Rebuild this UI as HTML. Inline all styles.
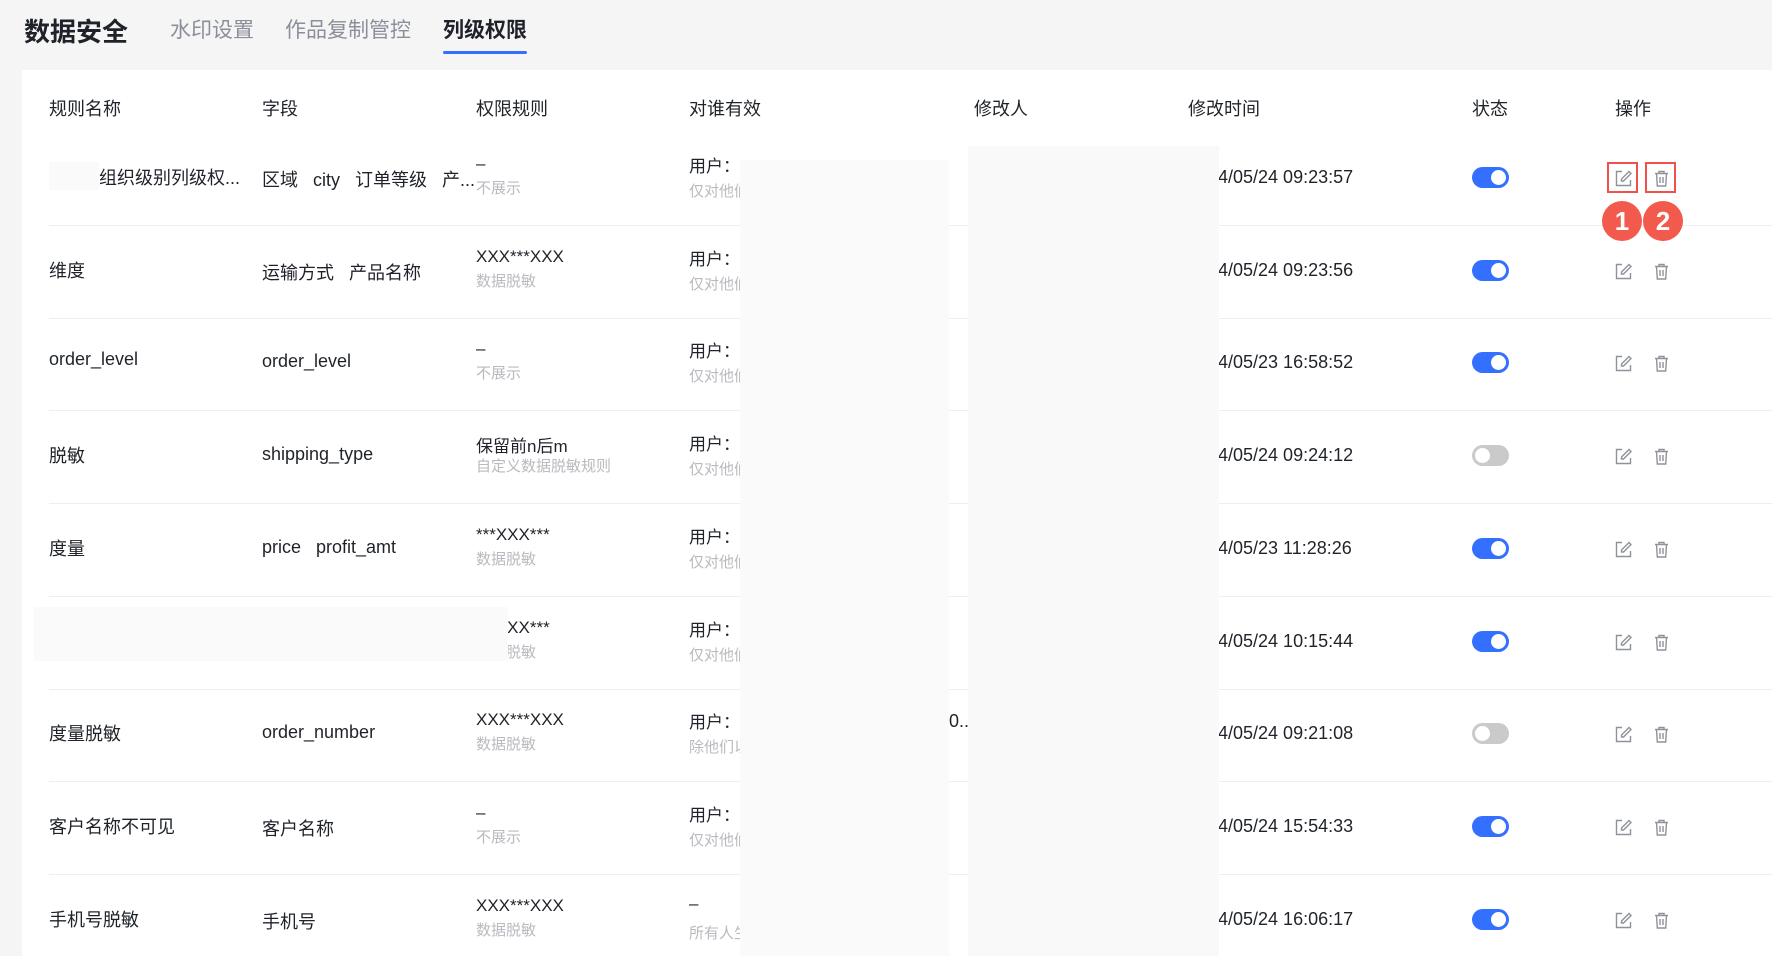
<!DOCTYPE html>
<html><head><meta charset="utf-8"><style>
*{margin:0;padding:0;box-sizing:border-box}
body{width:1772px;height:956px;background:#f5f5f6;font-family:"Liberation Sans","Noto Sans CJK SC",sans-serif;color:#1f2329;position:relative;overflow:hidden}
.a{position:absolute;white-space:nowrap}
.title{left:24px;top:12px;font-size:26px;font-weight:bold;color:#1f2329}
.tab{top:14px;font-size:21px;color:#8a8f99}
.card{left:22px;top:70px;width:1750px;height:886px;background:#fff}
.h{top:95px;font-size:18px;color:#1f2329}
.m{font-size:18px;color:#1f2329}
.s{font-size:15px;color:#b8babf}
.sep{left:49px;width:1723px;height:1px;background:#eeeff1}
.tg{width:37px;height:21px;border-radius:11px;background:#3370ff}
.tg::after{content:"";position:absolute;top:3px;right:3px;width:15px;height:15px;border-radius:50%;background:#fff}
.tg.off{background:#cacaca}
.tg.off::after{right:auto;left:3px}
.ov{background:#fafafa}
</style></head><body>
<div class="a title">数据安全</div>
<div class="a tab" style="left:170px">水印设置</div>
<div class="a tab" style="left:285px">作品复制管控</div>
<div class="a tab" style="left:443px;color:#1f2329;font-weight:bold">列级权限</div>
<div class="a" style="left:443px;top:51px;width:84px;height:3px;background:#3370ff;border-radius:2px"></div>
<div class="a card"></div>
<div class="a h" style="left:49px">规则名称</div>
<div class="a h" style="left:262px">字段</div>
<div class="a h" style="left:476px">权限规则</div>
<div class="a h" style="left:689px">对谁有效</div>
<div class="a h" style="left:974px">修改人</div>
<div class="a h" style="left:1188px">修改时间</div>
<div class="a h" style="left:1472px">状态</div>
<div class="a h" style="left:1615px">操作</div>
<div id="rows"></div>
<script>
var R=[
["组织级别列级权...","区域&nbsp;&nbsp;&nbsp;city&nbsp;&nbsp;&nbsp;订单等级&nbsp;&nbsp;&nbsp;产...","–","不展示","用户：","仅对他们生效","4/05/24 09:23:57",1],
["维度","运输方式&nbsp;&nbsp;&nbsp;产品名称","XXX***XXX","数据脱敏","用户：","仅对他们生效","4/05/24 09:23:56",1],
["order_level","order_level","–","不展示","用户：","仅对他们生效","4/05/23 16:58:52",1],
["脱敏","shipping_type","保留前n后m","自定义数据脱敏规则","用户：","仅对他们生效","4/05/24 09:24:12",0],
["度量","price&nbsp;&nbsp;&nbsp;profit_amt","***XXX***","数据脱敏","用户：","仅对他们生效","4/05/23 11:28:26",1],
["","","***XXX***","数据脱敏","用户：","仅对他们生效","4/05/24 10:15:44",1],
["度量脱敏","order_number","XXX***XXX","数据脱敏","用户：","除他们以外","4/05/24 09:21:08",0],
["客户名称不可见","客户名称","–","不展示","用户：","仅对他们生效","4/05/24 15:54:33",1],
["手机号脱敏","手机号","XXX***XXX","数据脱敏","–","所有人生效","4/05/24 16:06:17",1]];
var h="";
var ed='<svg width="19" height="19" viewBox="0 0 19 19" fill="none" stroke="#8f9299" stroke-width="1.4"><path d="M8 2.5H2.5v14h14V11"/><path d="M15 2.5l2 2-7.5 7.5H7.5V10z"/></svg>';
var tr='<svg width="17" height="19" viewBox="0 0 17 19" fill="none" stroke="#8f9299" stroke-width="1.4"><path d="M2 4.5h13M6 4.5V2.5h5v2M3.5 4.5l.8 12.5h8.4l.8-12.5M7 8v6M10 8v6"/></svg>';
R.forEach(function(r,i){
 var c=177+92.7*i;
 if(r[0]) h+='<div class="a m" style="left:'+(i==0?99:49)+'px;top:'+(c-13)+'px">'+r[0]+'</div>';
 if(r[1]) h+='<div class="a m" style="left:262px;top:'+(c-11)+'px">'+r[1]+'</div>';
 h+='<div class="a m" style="left:476px;top:'+(c-23)+'px;font-size:17px">'+r[2]+'</div>';
 h+='<div class="a s" style="left:476px;top:'+(c)+'px">'+r[3]+'</div>';
 h+='<div class="a m" style="left:689px;top:'+(c-25)+'px;font-size:17px">'+r[4]+'</div>';
 h+='<div class="a s" style="left:689px;top:'+(c+3)+'px">'+r[5]+'</div>';
 h+='<div class="a m" style="left:1218px;top:'+(c-10)+'px">'+r[6]+'</div>';
 h+='<div class="a tg'+(r[7]?'':' off')+'" style="left:1472px;top:'+(c-10)+'px"></div>';
 h+='<div class="a" style="left:1614px;top:'+(c-8)+'px">'+ed+'</div>';
 h+='<div class="a" style="left:1653px;top:'+(c-8)+'px">'+tr+'</div>';
 if(i<8) h+='<div class="a sep" style="top:'+(c+48)+'px"></div>';
});
document.getElementById('rows').innerHTML=h;
</script>
<div class="a" style="left:49px;top:162px;width:50px;height:28px;background:#fafafa"></div>
<div class="a" style="left:34px;top:607px;width:474px;height:54px;background:#fafafa"></div>
<div class="a m" style="left:949px;top:711px">0..</div>
<div class="a ov" style="left:740px;top:160px;width:209px;height:796px"></div>
<div class="a ov" style="left:968px;top:146px;width:251px;height:810px;background:#f9f9f9"></div>
<div class="a" style="left:1607px;top:162px;width:31px;height:31px;border:2px solid #f0524a"></div>
<div class="a" style="left:1645px;top:162px;width:31px;height:31px;border:2px solid #f0524a"></div>
<div class="a" style="left:1602px;top:201px;width:40px;height:40px;border-radius:50%;background:#f25a4d;color:#fff;font-size:26px;font-weight:bold;text-align:center;line-height:40px">1</div>
<div class="a" style="left:1643px;top:201px;width:40px;height:40px;border-radius:50%;background:#f25a4d;color:#fff;font-size:26px;font-weight:bold;text-align:center;line-height:40px">2</div>
</body></html>
